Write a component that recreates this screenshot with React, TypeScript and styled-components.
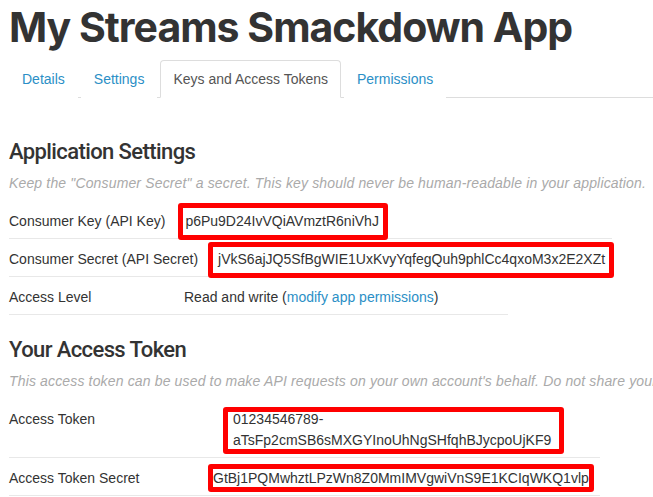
import React from "react";
import styled, { createGlobalStyle } from "styled-components";

const Global = createGlobalStyle`
  html, body { margin: 0; padding: 0; background: #fff; }
  body { font-family: "Liberation Sans", Arial, sans-serif; font-size: 14px; color: #333; }
`;

const Page = styled.div`
  padding: 0 9px;
  overflow: hidden;
  height: 497px;
`;

const Title = styled.h1`
  margin: 0;
  padding-top: 2px;
  font-family: Inter, "Open Sans", sans-serif;
  font-weight: 700;
  font-size: 41px;
  line-height: 50px;
  color: #333;
  letter-spacing: -1px;
  white-space: nowrap;
`;

const Tabs = styled.ul`
  display: flex;
  list-style: none;
  margin: 8px -9px 0 0;
  padding: 0;
  border-bottom: 1px solid #ddd;
`;

const Tab = styled.li<{ $active?: boolean }>`
  margin: 0 3px -1px 0;
  padding: 0 12px;
  height: 36px;
  display: flex;
  align-items: center;
  border: 1px solid ${(p) => (p.$active ? "#ddd" : "transparent")};
  border-bottom-color: ${(p) => (p.$active ? "#fff" : "transparent")};
  border-radius: 4px 4px 0 0;
  background: #fff;
  color: ${(p) => (p.$active ? "#555" : "#2b8fc6")};
  font-size: 14px;
`;

const Heading = styled.h2<{ $top: number }>`
  margin: ${(p) => p.$top}px 0 0;
  font-family: Roboto, "Liberation Sans", sans-serif;
  font-weight: 500;
  font-size: 22px;
  line-height: 26px;
  letter-spacing: -0.6px;
  color: #333;
`;

const Note = styled.p`
  margin: 8px 0 7px;
  font-style: italic;
  color: #aaa;
  line-height: 21px;
  letter-spacing: 0.15px;
  white-space: nowrap;
`;

const Row = styled.div<{ $width: number }>`
  display: flex;
  align-items: flex-start;
  width: ${(p) => p.$width}px;
  padding: 10px 0 6px;
  border-bottom: 1px solid #e8e8e8;
  line-height: 21px;
`;

const Label = styled.span<{ $min: number }>`
  flex: none;
  min-width: ${(p) => p.$min}px;
  padding-right: 20px;
  white-space: nowrap;
`;

const Value = styled.span<{ $wrap?: number }>`
  position: relative;
  display: inline-block;
  white-space: ${(p) => (p.$wrap ? "normal" : "nowrap")};
  width: ${(p) => (p.$wrap ? `${p.$wrap}px` : "auto")};
`;

const Mark = styled.span<{ $t: number; $r: number; $b: number; $l: number }>`
  position: absolute;
  top: ${(p) => -p.$t}px;
  right: ${(p) => -p.$r}px;
  bottom: ${(p) => -p.$b}px;
  left: ${(p) => -p.$l}px;
  border: 5px solid #f00;
  border-radius: 3px;
  pointer-events: none;
`;

const Link = styled.a`
  color: #2b8fc6;
  text-decoration: none;
`;

export default function App() {
  return (
    <Page>
      <Global />
      <Title>My Streams Smackdown App</Title>
      <Tabs>
        <Tab>Details</Tab>
        <Tab>Settings</Tab>
        <Tab $active>Keys and Access Tokens</Tab>
        <Tab>Permissions</Tab>
      </Tabs>

      <Heading $top={41}>Application Settings</Heading>
      <Note>Keep the "Consumer Secret" a secret. This key should never be human-readable in your application.</Note>
      <Row $width={603}>
        <Label $min={155}>Consumer Key (API Key)</Label>
        <Value>
          p6Pu9D24IvVQiAVmztR6niVhJ
          <Mark $t={8} $r={9} $b={8} $l={7} />
        </Value>
      </Row>
      <Row $width={603}>
        <Label $min={155}>Consumer Secret (API Secret)</Label>
        <Value>
          jVkS6ajJQ5SfBgWIE1UxKvyYqfegQuh9phlCc4qxoM3x2E2XZt
          <Mark $t={7} $r={9} $b={8} $l={10} />
        </Value>
      </Row>
      <Row $width={499}>
        <Label $min={155}>Access Level</Label>
        <span>
          Read and write (<Link href="#">modify app permissions</Link>)
        </span>
      </Row>

      <Heading $top={22}>Your Access Token</Heading>
      <Note>This access token can be used to make API requests on your own account's behalf. Do not share your access token secret with anyone.</Note>
      <Row $width={591}>
        <Label $min={204}>Access Token</Label>
        <Value $wrap={322}>
          01234546789-aTsFp2cmSB6sMXGYInoUhNgSHfqhBJycpoUjKF9
          <Mark $t={2} $r={9} $b={3} $l={10} />
        </Value>
      </Row>
      <Row $width={591}>
        <Label $min={184}>Access Token Secret</Label>
        <Value>
          GtBj1PQMwhztLPzWn8Z0MmIMVgwiVnS9E1KCIqWKQ1vlp
          <Mark $t={4} $r={5} $b={3} $l={5} />
        </Value>
      </Row>
    </Page>
  );
}
